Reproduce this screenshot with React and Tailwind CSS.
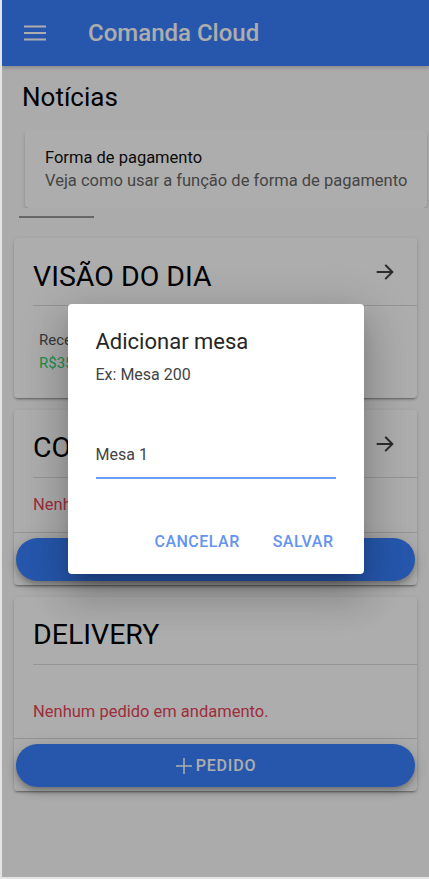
import React, { useState } from "react";

const ArrowIcon = () => (
  <svg width="22" height="22" viewBox="0 0 24 24" fill="none" stroke="#424242" strokeWidth="2.2" strokeLinecap="square">
    <path d="M13 5l7 7-7 7" />
    <path d="M19 12H4" />
  </svg>
);

const MenuIcon = () => (
  <svg width="22" height="16" viewBox="0 0 22 16" fill="none" stroke="#ffffff" strokeWidth="2">
    <path d="M0 1.5h22M0 8h22M0 14.5h22" />
  </svg>
);

const PlusIcon = () => (
  <svg width="18" height="18" viewBox="0 0 18 18" fill="none" stroke="#ffffff" strokeWidth="1.5">
    <path d="M9 1v16M1 9h16" />
  </svg>
);

const CardHeader = ({ title, arrow, offset = "mt-[10px]" }) => (
  <div className="ml-[19px] h-[68px] flex items-center justify-between pr-[21px] border-b border-[#dcdcdc]">
    <span className={`text-[28.5px] leading-none text-black ${offset}`}>{title}</span>
    {arrow && <ArrowIcon />}
  </div>
);

const ActionButton = ({ label }) => (
  <div className="border-t border-[#dcdcdc] px-[2px] pt-[5px] pb-[4px]">
    <button className="w-full h-[43px] rounded-full bg-[#3880ff] text-white flex items-center justify-center gap-[3px] text-[16px] font-medium tracking-[0.05em] shadow-[0_3px_5px_-1px_rgba(0,0,0,0.2),0_6px_10px_0_rgba(0,0,0,0.14),0_1px_18px_0_rgba(0,0,0,0.12)]">
      <PlusIcon />
      {label}
    </button>
  </div>
);

const cardClass =
  "mx-3 bg-white rounded-[4px] shadow-[0_3px_1px_-2px_rgba(0,0,0,0.2),0_2px_2px_0_rgba(0,0,0,0.14),0_1px_5px_0_rgba(0,0,0,0.12)]";

export default function App() {
  const [mesa, setMesa] = useState("Mesa 1");

  return (
    <div
      className="relative h-screen overflow-hidden bg-[#fdfdfd] border-l-2 border-b-2 border-[#e4e4e4]"
      style={{ fontFamily: "Roboto, 'Liberation Sans', sans-serif" }}
    >
      <header className="h-[66px] bg-[#3880ff] flex items-center pl-[22px] shadow-[0_2px_4px_rgba(0,0,0,0.2)]">
        <MenuIcon />
        <h1 className="ml-[42px] text-[24px] font-medium text-white">Comanda Cloud</h1>
      </header>

      <main>
        <h2 className="ml-5 mt-[17px] text-[26px] leading-[28px] text-black">Notícias</h2>

        <div className="mt-[20px] pl-[23px] overflow-hidden">
          <div className="w-[402px] bg-white rounded-[4px] px-5 pt-[15px] pb-[16px] shadow-[0_3px_1px_-2px_rgba(0,0,0,0.2),0_2px_2px_0_rgba(0,0,0,0.14),0_1px_5px_0_rgba(0,0,0,0.12)]">
            <p className="text-[16.5px] leading-[23px] text-[#111]">Forma de pagamento</p>
            <p className="text-[16.5px] leading-[23px] text-[#666] whitespace-nowrap">
              Veja como usar a função de forma de pagamento
            </p>
          </div>
        </div>
        <div className="ml-[17px] mt-[8px] w-[75px] h-[2px] bg-[#999]" />

        <section className={`${cardClass} mt-[20px]`}>
          <CardHeader title="VISÃO DO DIA" arrow offset="mt-[12px]" />
          <div className="pl-[25px] py-[23px] text-[15px] leading-[23px]">
            <p className="text-[#555]">Recebido hoje</p>
            <p className="text-[#2dd36f]">R$350,00</p>
          </div>
        </section>

        <section className={`${cardClass} mt-[12px]`}>
          <CardHeader title="COMANDAS" arrow />
          <p className="pl-[19px] h-[54px] flex items-center text-[16.5px] text-[#eb445a]">Nenhuma comanda aberta.</p>
          <ActionButton label="COMANDA" />
        </section>

        <section className={`${cardClass} mt-[12px]`}>
          <CardHeader title="DELIVERY" />
          <p className="pl-[19px] pt-[36px] h-[73px] text-[16.5px] leading-[22px] text-[#eb445a]">
            Nenhum pedido em andamento.
          </p>
          <ActionButton label="PEDIDO" />
        </section>
      </main>

      <div className="absolute inset-0 bg-black/[0.32] flex items-center justify-center">
        <div className="w-[296px] h-[270px] bg-white rounded-[4px] flex flex-col shadow-[0_11px_15px_-7px_rgba(0,0,0,0.2),0_24px_38px_3px_rgba(0,0,0,0.14),0_9px_46px_8px_rgba(0,0,0,0.12)]">
          <div className="px-[28px] pt-[24px]">
            <h3 className="text-[22px] leading-[28px] text-[#262626]">Adicionar mesa</h3>
            <p className="mt-[9px] text-[16px] leading-[20px] text-[#444]">Ex: Mesa 200</p>
          </div>
          <div className="px-[28px] mt-[58px]">
            <input
              value={mesa}
              onChange={(e) => setMesa(e.target.value)}
              className="w-full text-[16px] leading-[20px] text-[#444] pb-[12px] border-b-2 border-[#6a9cf6] outline-none"
              autoFocus
            />
          </div>
          <div className="mt-auto mb-[14px] flex justify-end gap-[17px] pr-[22px]">
            <button className="px-2 py-[6px] text-[16px] font-medium text-[#6494ef] tracking-[0.03em]">CANCELAR</button>
            <button className="px-2 py-[6px] text-[16px] font-medium text-[#6494ef] tracking-[0.03em]">SALVAR</button>
          </div>
        </div>
      </div>
    </div>
  );
}
